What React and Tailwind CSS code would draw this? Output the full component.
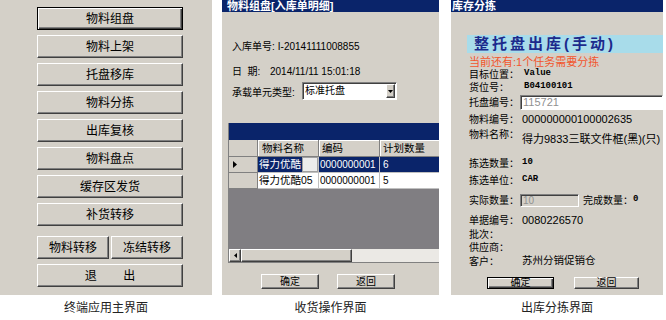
import React from "react";

const raised =
  "border border-t-white border-l-white border-r-[#404040] border-b-[#404040] shadow-[inset_-1px_-1px_0_#808080] bg-[#d4d0c8]";
const raisedDef =
  "border border-black shadow-[inset_1px_1px_0_#fff,inset_-1px_-1px_0_#404040,inset_-2px_-2px_0_#808080] bg-[#d4d0c8]";
const sunken =
  "border border-t-[#808080] border-l-[#808080] border-r-white border-b-white shadow-[inset_1px_1px_0_#404040]";

function Btn({ children, def, className }) {
  return (
    <div className={(def ? raisedDef : raised) + " flex items-center justify-center " + className}>
      {children}
    </div>
  );
}

function LeftPanel() {
  const items = ["物料组盘", "物料上架", "托盘移库", "物料分拣", "出库复核", "物料盘点", "缓存区发货", "补货转移"];
  return (
    <div className="w-[212px] h-[295px] bg-[#d4d0c8] pl-[37px] pt-[7px] flex flex-col gap-[5px] text-[12px] text-black">
      {items.map((t, i) => (
        <Btn key={t} def={i === 0} className="w-[146px] h-[23px]">
          {t}
        </Btn>
      ))}
      <div className="mt-[5px] flex gap-[2px] w-[146px]">
        <Btn className="w-[72px] h-[23px]">物料转移</Btn>
        <Btn className="w-[72px] h-[23px]">冻结转移</Btn>
      </div>
      <Btn className="w-[146px] h-[23px]">
        <span className="whitespace-pre">退        出</span>
      </Btn>
    </div>
  );
}

function MiddlePanel() {
  return (
    <div className="w-[217px] h-[295px] bg-[#d4d0c8] flex flex-col text-[10px] text-black overflow-hidden">
      <div className="h-[12px] bg-[#0a246a] text-white font-bold text-[11px] leading-[12px] pl-[5px] whitespace-nowrap">
        物料组盘[入库单明细]
      </div>
      <div className="mt-[29px] h-[12px] pl-[10px] flex items-center leading-[12px] whitespace-nowrap">
        <span>入库单号:</span>
        <span className="ml-[3px]">I-20141111008855</span>
      </div>
      <div className="mt-[13px] h-[12px] pl-[10px] flex items-center leading-[12px] whitespace-nowrap">
        <span className="w-[38px] whitespace-pre">日  期:</span>
        <span>2014/11/11 15:01:18</span>
      </div>
      <div className="mt-[4px] h-[18px] pl-[10px] flex items-center whitespace-nowrap">
        <span className="w-[70px] pt-[3px]">承载单元类型:</span>
        <div className={"w-[95px] h-[18px] bg-white flex items-center " + sunken}>
          <span className="flex-1 pl-[2px] leading-[12px]">标准托盘</span>
          <div className={"w-[9px] h-[14px] mr-[1px] flex items-center justify-center " + raised}>
            <svg width="5" height="3" viewBox="0 0 5 3"><path d="M0 0h5L2.5 3z" fill="#000" /></svg>
          </div>
        </div>
      </div>
      <div className="mt-[23px] ml-[6px] border-l border-b border-l-[#808080] border-b-[#808080] flex flex-col">
        <div className="h-[17px] bg-[#0a246a]" />
        <div className="h-[17px] flex bg-[#d4d0c8] text-[10.5px] leading-[16px]">
          <div className="w-[29px] border-r border-r-[#808080] border-b border-b-[#808080]" />
          <div className="w-[61px] pl-[4px] border-r border-r-[#808080] border-b border-b-[#808080] shadow-[inset_1px_1px_0_#fff]">物料名称</div>
          <div className="w-[61px] pl-[3px] border-r border-r-[#808080] border-b border-b-[#808080] shadow-[inset_1px_1px_0_#fff]">编码</div>
          <div className="flex-1 pl-[3px] border-b border-b-[#808080] shadow-[inset_1px_1px_0_#fff] whitespace-nowrap">计划数量</div>
        </div>
        <div className="h-[16px] flex leading-[15px]">
          <div className="w-[29px] bg-[#d4d0c8] border-r border-r-[#808080] border-b border-b-[#808080] flex items-center pl-[4px]">
            <svg width="4" height="7" viewBox="0 0 4 7"><path d="M0 0l4 3.5L0 7z" fill="#000" /></svg>
          </div>
          <div className="w-[61px] flex border-r border-r-[#c0c0c0] border-b border-b-[#c0c0c0]">
            <span className="bg-[#0a246a] text-white pl-[1px] pr-[1px] text-[10.5px]">得力优酷</span>
            <div className="flex-1 bg-[#ececec] border border-[#a0a0a0]" />
          </div>
          <div className="w-[61px] bg-[#0a246a] text-white pl-[1px] border-r border-r-[#c0c0c0] border-b border-b-[#c0c0c0]">0000000001</div>
          <div className="flex-1 bg-[#0a246a] text-white pl-[3px] border-b border-b-[#c0c0c0]">6</div>
        </div>
        <div className="h-[16px] flex leading-[15px] bg-white">
          <div className="w-[29px] bg-[#d4d0c8] border-r border-r-[#808080] border-b border-b-[#808080]" />
          <div className="w-[61px] pl-[1px] border-r border-r-[#c0c0c0] border-b border-b-[#c0c0c0] whitespace-nowrap text-[10.5px]">得力优酷05</div>
          <div className="w-[61px] pl-[1px] border-r border-r-[#c0c0c0] border-b border-b-[#c0c0c0]">0000000001</div>
          <div className="flex-1 pl-[3px] border-b border-b-[#c0c0c0]">5</div>
        </div>
        <div className="h-[60px] bg-[#807e82]" />
        <div className="h-[13px] flex bg-[#ebe9e5]">
          <div className={"w-[12px] h-[13px] flex items-center justify-center " + raised}>
            <svg width="3" height="5" viewBox="0 0 3 5"><path d="M3 0v5L0 2.5z" fill="#000" /></svg>
          </div>
          <div className={"w-[111px] h-[13px] " + raised} />
          <div className="flex-1" />
        </div>
      </div>
      <div className="mt-[11px] flex pl-[39px] gap-[18px]">
        <Btn className="w-[58px] h-[15px] text-[10px]">确定</Btn>
        <Btn className="w-[58px] h-[15px] text-[10px]">返回</Btn>
      </div>
    </div>
  );
}

function Row({ label, children, h, className = "", labelW = "w-[53px]" }) {
  return (
    <div className={"flex items-center whitespace-nowrap " + h + " " + className}>
      <span className={labelW + " shrink-0"}>{label}</span>
      {children}
    </div>
  );
}

function RightPanel() {
  const mono = "font-['Liberation_Mono',monospace] font-bold text-[9px]";
  return (
    <div className="w-[212px] h-[295px] bg-[#d4d0c8] flex flex-col text-[10px] text-black overflow-hidden">
      <div className="h-[12px] bg-[#0a246a] text-white font-bold text-[11px] leading-[12px] pl-[1px] whitespace-nowrap">
        库存分拣
      </div>
      <div className="mt-[23px] ml-[16px] h-[18px] bg-[#a8dcea] flex items-center pl-[7px] text-[#1c2a8c] font-bold text-[15px] tracking-[3px] whitespace-nowrap leading-[18px]">
        整托盘出库(手动)
      </div>
      <div className="pl-[18px] flex flex-col">
        <div className="mt-[3px] h-[12px] flex items-center text-[#f2552c] text-[11px] whitespace-nowrap">当前还有:1个任务需要分拣</div>
        <Row label="目标位置：" h="h-[12px]">
          <span className={"ml-[2px] " + mono}>Value</span>
        </Row>
        <Row label="货位号：" h="h-[14px]">
          <span className={"ml-[2px] " + mono}>B04100101</span>
        </Row>
        <Row label="托盘编号：" h="h-[16px]" labelW="w-[51px]">
          <div className={"flex-1 h-[15px] bg-white flex items-center pl-[2px] text-[#909090] text-[11px] " + sunken}>115721</div>
        </Row>
        <Row label="物料编号：" h="h-[18px]">
          <span className="text-[11px]">000000000100002635</span>
        </Row>
        <div className="h-[18px] flex items-start whitespace-nowrap">
          <span className="w-[53px] shrink-0 mt-[1px] leading-[12px]">物料名称：</span>
          <span className="mt-[5px] leading-[12px] text-[11px]">得力9833三联文件框(黑)(只)</span>
        </div>
        <Row label="拣选数量：" h="h-[16px] mt-[9px]">
          <span className={mono}>10</span>
        </Row>
        <Row label="拣选单位：" h="h-[18px]">
          <span className={mono}>CAR</span>
        </Row>
        <Row label="实际数量：" h="h-[16px] mt-[3px]" labelW="w-[51px]">
          <div className={"w-[59px] h-[13px] bg-[#d4d0c8] flex items-center pl-[2px] text-[#909090] " + sunken}>10</div>
          <span className="ml-[4px]">完成数量：</span>
          <span className={mono}>0</span>
        </Row>
        <Row label="单据编号：" h="h-[16px] mt-[4px]">
          <span className="text-[11px]">0080226570</span>
        </Row>
        <Row label="批次：" h="h-[12px]" />
        <Row label="供应商：" h="h-[14px]" />
        <Row label="客户：" h="h-[14px]">
          <span className="text-[10.5px]">苏州分销促销仓</span>
        </Row>
        <div className="mt-[9px] flex gap-[20px] pl-[18px]">
          <Btn def className="w-[67px] h-[12px] text-[10px] leading-[10px]">确定</Btn>
          <Btn className="w-[65px] h-[12px] text-[10px] leading-[10px]">返回</Btn>
        </div>
      </div>
    </div>
  );
}

function Column({ children, caption }) {
  return (
    <div className="flex flex-col items-center">
      {children}
      <div className="h-[25px] flex items-center justify-center text-[12px] text-[#222]">{caption}</div>
    </div>
  );
}

export default function App() {
  return (
    <div className="w-[666px] h-[320px] bg-white flex font-['Liberation_Sans','Noto_Sans_CJK_SC',sans-serif] overflow-hidden">
      <Column caption="终端应用主界面">
        <LeftPanel />
      </Column>
      <div className="ml-[10px]">
        <Column caption="收货操作界面">
          <MiddlePanel />
        </Column>
      </div>
      <div className="ml-[12px]">
        <Column caption="出库分拣界面">
          <RightPanel />
        </Column>
      </div>
    </div>
  );
}
